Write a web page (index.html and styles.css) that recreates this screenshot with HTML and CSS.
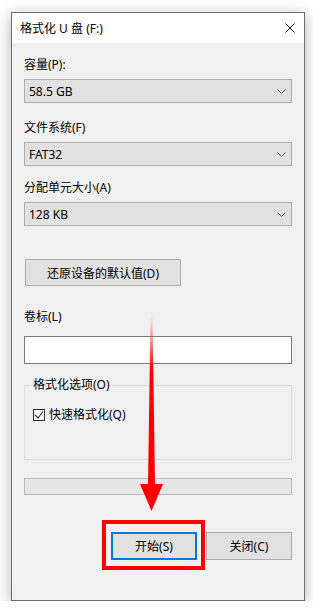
FILE: index.html
```html
<!DOCTYPE html>
<html lang="zh-CN">
  <head>
    <meta charset="UTF-8" />
    <meta name="viewport" content="width=device-width, initial-scale=1.0" />
    <title>格式化 U 盘 (F:)</title>
    <link rel="stylesheet" href="styles.css">
  </head>
  <body>
    <div class="window">
      <div class="titlebar">
        <span>格式化 U 盘 (F:)</span>
        <svg class="close" width="10" height="10" viewBox="0 0 10 10">
          <path d="M0.5 0.5 L9.5 9.5 M9.5 0.5 L0.5 9.5" stroke="#111" stroke-width="1" fill="none" />
        </svg>
      </div>
      <div class="content">
        <div class="label">容量(P):</div>
        <div class="combo">
          <span>58.5 GB</span>
          <svg width="9" height="5" viewBox="0 0 9 5"><polyline points="0.5,0.5 4.5,4.5 8.5,0.5" stroke="#606060" fill="none" /></svg>
        </div>

        <div class="label label-fs">文件系统(F)</div>
        <div class="combo">
          <span>FAT32</span>
          <svg width="9" height="5" viewBox="0 0 9 5"><polyline points="0.5,0.5 4.5,4.5 8.5,0.5" stroke="#606060" fill="none" /></svg>
        </div>

        <div class="label label-unit">分配单元大小(A)</div>
        <div class="combo">
          <span>128 KB</span>
          <svg width="9" height="5" viewBox="0 0 9 5"><polyline points="0.5,0.5 4.5,4.5 8.5,0.5" stroke="#606060" fill="none" /></svg>
        </div>

        <button type="button" class="btn btn-restore">还原设备的默认值(D)</button>

        <div class="label label-vol">卷标(L)</div>
        <input type="text" class="volume" />

        <fieldset class="options">
          <legend>格式化选项(O)</legend>
          <label class="check">
            <span class="box">
              <svg width="10" height="10" viewBox="0 0 10 10"><polyline points="1,5 4,8 9,1.5" stroke="#333" stroke-width="1.2" fill="none" /></svg>
            </span>
            快速格式化(Q)
          </label>
        </fieldset>

        <div class="progress"></div>

        <div class="actions">
          <span class="spot">
            <button type="button" class="btn btn-start">开始(S)</button>
          </span>
          <button type="button" class="btn">关闭(C)</button>
        </div>
      </div>
    </div>

    <svg class="arrow" width="313" height="612" viewBox="0 0 313 612">
      <defs>
        <linearGradient id="fade" x1="0" y1="316" x2="0" y2="370" gradientUnits="userSpaceOnUse">
          <stop offset="0" stop-color="#ff0000" stop-opacity="0" />
          <stop offset="1" stop-color="#ff0000" stop-opacity="1" />
        </linearGradient>
      </defs>
      <polygon points="150.5,316 152.5,316 155,486 148,486" fill="url(#fade)" />
      <polygon points="140,484 163,484 151.5,511" fill="#ff0000" />
    </svg>
  </body>
</html>
```

FILE: styles.css
```css
body {
  margin: 0;
  background-color: #fff;
  font-family: "Noto Sans", "Noto Sans CJK SC", sans-serif;
  font-size: 12px;
  color: #000;
  position: relative;
}
.window {
  margin: 12px 0 0 11px;
  width: 294px;
  height: 589px;
  box-sizing: border-box;
  border: 1px solid #6d6d6d;
  background-color: #f0f0f0;
  box-shadow: 0 3px 14px rgba(0, 0, 0, 0.3);
  display: flex;
  flex-direction: column;
}
.titlebar {
  height: 30px;
  flex: none;
  background-color: #fff;
  padding: 0 9px 0 8px;
  display: flex;
  align-items: center;
  justify-content: space-between;
}
.content {
  padding: 14px 12px 0 12px;
  display: flex;
  flex-direction: column;
}
.label {
  height: 16px;
  line-height: 16px;
  margin-bottom: 6px;
}
.label-fs {
  margin-top: 17px;
}
.label-unit {
  margin-top: 14px;
}
.label-vol {
  margin-top: 23px;
  margin-bottom: 11px;
}
.combo {
  height: 24px;
  box-sizing: border-box;
  border: 1px solid #adadad;
  background-color: #e1e1e1;
  display: flex;
  align-items: center;
  justify-content: space-between;
  padding: 0 5px 0 4px;
}
.btn {
  height: 28px;
  width: 86px;
  box-sizing: border-box;
  border: 1px solid #adadad;
  background-color: #e1e1e1;
  font-family: inherit;
  font-size: 12px;
  color: #000;
  padding: 0;
}
.btn-restore {
  margin: 33px 0 0 1px;
  width: 156px;
  height: 27px;
}
.volume {
  height: 28px;
  box-sizing: border-box;
  border: 1px solid #7a7a7a;
  background-color: #fff;
  margin: 0;
}
.options {
  margin: 13px 0 0;
  padding: 14px 8px 36px;
  border: 1px solid #dcdcdc;
  min-width: 0;
}
.options legend {
  padding: 0 2px;
  margin-left: -2px;
  line-height: 16px;
}
.check {
  display: flex;
  align-items: center;
  gap: 4px;
  line-height: 16px;
}
.box {
  width: 12px;
  height: 12px;
  box-sizing: border-box;
  border: 1px solid #333;
  background-color: #fff;
  display: flex;
  align-items: center;
  justify-content: center;
}
.progress {
  margin-top: 18px;
  height: 17px;
  box-sizing: border-box;
  border: 1px solid #bcbcbc;
  background-color: #e6e6e6;
}
.actions {
  margin-top: 37px;
  display: flex;
  justify-content: flex-end;
  gap: 9px;
}
.spot {
  position: relative;
  display: flex;
}
.spot::after {
  content: "";
  position: absolute;
  top: -12px;
  left: -9px;
  right: -8px;
  bottom: -10px;
  border: 4px solid #ff0000;
}
.btn-start {
  border: 2px solid #0078d7;
}
.arrow {
  position: absolute;
  left: 0;
  top: 0;
  pointer-events: none;
}
```
